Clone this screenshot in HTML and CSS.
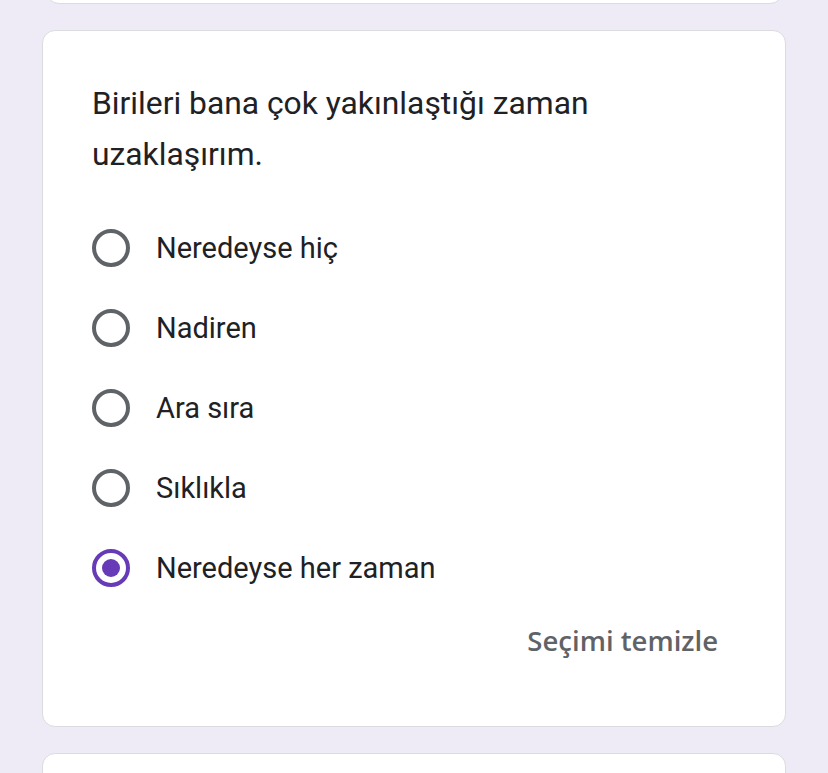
FILE: index.html
```html
<!DOCTYPE html>
<html lang="tr">
<head>
    <meta charset="UTF-8">
    <meta name="viewport" content="width=device-width, initial-scale=1.0">
    <title>Form</title>
    <link rel="stylesheet" href="styles.css">
</head>
<body>
  <div class="kartlar">
    <div class="kart kart-onceki"></div>

    <div class="kart soru">
      <p class="soru-metin">Birileri bana çok yakınlaştığı zaman uzaklaşırım.</p>
      <div class="secenekler">
        <label class="secenek"><span class="radyo"></span><span class="etiket">Neredeyse hiç</span></label>
        <label class="secenek"><span class="radyo"></span><span class="etiket">Nadiren</span></label>
        <label class="secenek"><span class="radyo"></span><span class="etiket">Ara sıra</span></label>
        <label class="secenek"><span class="radyo"></span><span class="etiket">Sıklıkla</span></label>
        <label class="secenek secili"><span class="radyo"></span><span class="etiket">Neredeyse her zaman</span></label>
      </div>
      <div class="alt">
        <button class="temizle">Seçimi temizle</button>
      </div>
    </div>

    <div class="kart kart-sonraki"></div>
  </div>
</body>
</html>
```

FILE: styles.css
```css
* {margin: 0; box-sizing: border-box;}
body {background-color: #eeeaf6; font-family: Roboto, "Liberation Sans", sans-serif; color: #202124; height: 773px; overflow: hidden;}

.kartlar {display: flex; flex-direction: column; gap: 26px; padding: 0 42px;}

.kart {background-color: #ffffff; border: 1px solid #dadce0; border-radius: 13px;}
.kart-onceki {height: 44px; margin: -40px 3px 0 4px;}
.kart-sonraki {height: 40px;}

.soru {height: 697px; padding: 47px 50px 0 49px;}
.soru-metin {font-size: 31.8px; line-height: 51px; max-width: 560px;}

.secenekler {display: flex; flex-direction: column; margin-top: 28px;}
.secenek {display: flex; align-items: center; height: 80px; gap: 26px; font-size: 29px; cursor: pointer;}

.radyo {width: 38px; height: 38px; border: 4px solid #5f6368; border-radius: 50%; display: flex; align-items: center; justify-content: center; flex-shrink: 0;}
.secili .radyo {border-color: #673ab7;}
.secili .radyo::after {content: ""; width: 18px; height: 18px; border-radius: 50%; background-color: #673ab7;}

.alt {display: flex; justify-content: flex-end; margin-top: 6px; padding-right: 17px;}
.temizle {background: none; border: none; font-family: "Open Sans", Roboto, sans-serif; font-weight: 600; font-size: 27.5px; color: #5f6368; padding: 8px 0; cursor: pointer;}
```
